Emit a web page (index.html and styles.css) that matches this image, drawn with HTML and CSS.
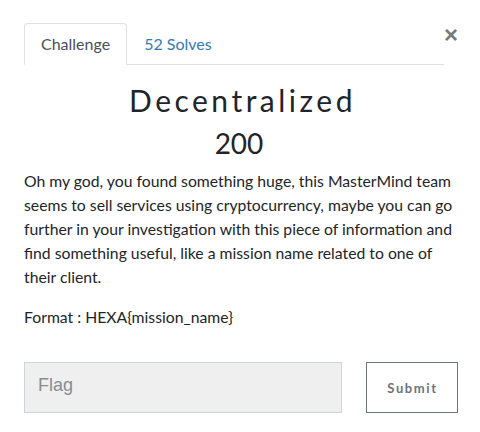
FILE: index.html
```html
<!DOCTYPE html>
<html>
<head>
<meta charset="utf-8">
<link rel="stylesheet" href="styles.css">
</head>
<body>
<div class="modal">
  <div class="header">
    <ul class="tabs">
      <li class="tab active">Challenge</li>
      <li class="tab link">52 Solves</li>
    </ul>
    <button class="close" aria-label="Close">×</button>
  </div>
  <h2 class="title">Decentralized</h2>
  <h3 class="value">200</h3>
  <div class="desc">
    <p>Oh my god, you found something huge, this MasterMind team seems to sell services using cryptocurrency, maybe you can go further in your investigation with this piece of information and find something useful, like a mission name related to one of their client.</p>
    <p>Format : HEXA{mission_name}</p>
  </div>
  <div class="form">
    <input class="flag" type="text" placeholder="Flag">
    <button class="submit">Submit</button>
  </div>
</div>
</body>
</html>
```

FILE: styles.css
```css
html, body {
  margin: 0;
  padding: 0;
  background: #fff;
}
body {
  font-family: Lato, "Noto Sans", sans-serif;
  color: #212529;
}
.modal {
  padding: 23px 22px 0 24px;
}
.header {
  display: flex;
  align-items: flex-start;
}
.tabs {
  list-style: none;
  margin: 0;
  padding: 0;
  width: 420px;
  display: flex;
  border-bottom: 1px solid #dee2e6;
  height: 41px;
}
.tab {
  font-size: 16px;
  line-height: 24px;
  padding: 8px 16px;
  margin-bottom: -1px;
  border: 1px solid transparent;
  border-top-left-radius: 4px;
  border-top-right-radius: 4px;
}
.tab.active {
  color: #495057;
  border-color: #dee2e6 #dee2e6 #fff;
  background: #fff;
}
.tab.link {
  color: #337ab7;
}
.close {
  margin: 4px 0 0 0;
  padding: 0;
  border: 0;
  background: none;
  font-family: "Liberation Sans", Arial, sans-serif;
  font-size: 24px;
  font-weight: 700;
  line-height: 16px;
  color: #7a7a7a;
  width: 14px;
  text-align: center;
}
.title {
  margin: 15px 0 0;
  text-align: center;
  font-family: Lato, sans-serif;
  font-weight: 400;
  font-size: 30px;
  line-height: 40px;
  letter-spacing: 3.5px;
  color: #212529;
  padding-left: 3px;
}
.value {
  margin: 5px 0 0;
  text-align: center;
  font-weight: 400;
  font-size: 28px;
  line-height: 36px;
  color: #212529;
  padding-right: 4px;
}
.desc {
  margin-top: 8px;
  width: 436px;
}
.desc p {
  margin: 0 0 16px;
  font-size: 15.75px;
  line-height: 24px;
  color: #212529;
}
.desc p:last-child {
  margin-bottom: 0;
}
.form {
  margin-top: 33px;
  display: flex;
  align-items: stretch;
  width: 434px;
  justify-content: space-between;
}
.flag {
  box-sizing: border-box;
  width: 318px;
  height: 51px;
  margin: 0;
  padding: 0 13px 5px;
  border: 1px solid #ced4da;
  background: #efefef;
  font-family: "Liberation Sans", Arial, sans-serif;
  font-size: 18px;
  color: #495057;
  outline: none;
}
.flag::placeholder {
  color: #868e96;
}
.submit {
  box-sizing: border-box;
  width: 92px;
  height: 51px;
  margin: 0;
  padding: 0 0 0 1px;
  border: 1px solid #6c757d;
  background: #fff;
  font-family: Lato, sans-serif;
  font-weight: 700;
  font-size: 13px;
  letter-spacing: 1.6px;
  color: #6c757d;
}
```
